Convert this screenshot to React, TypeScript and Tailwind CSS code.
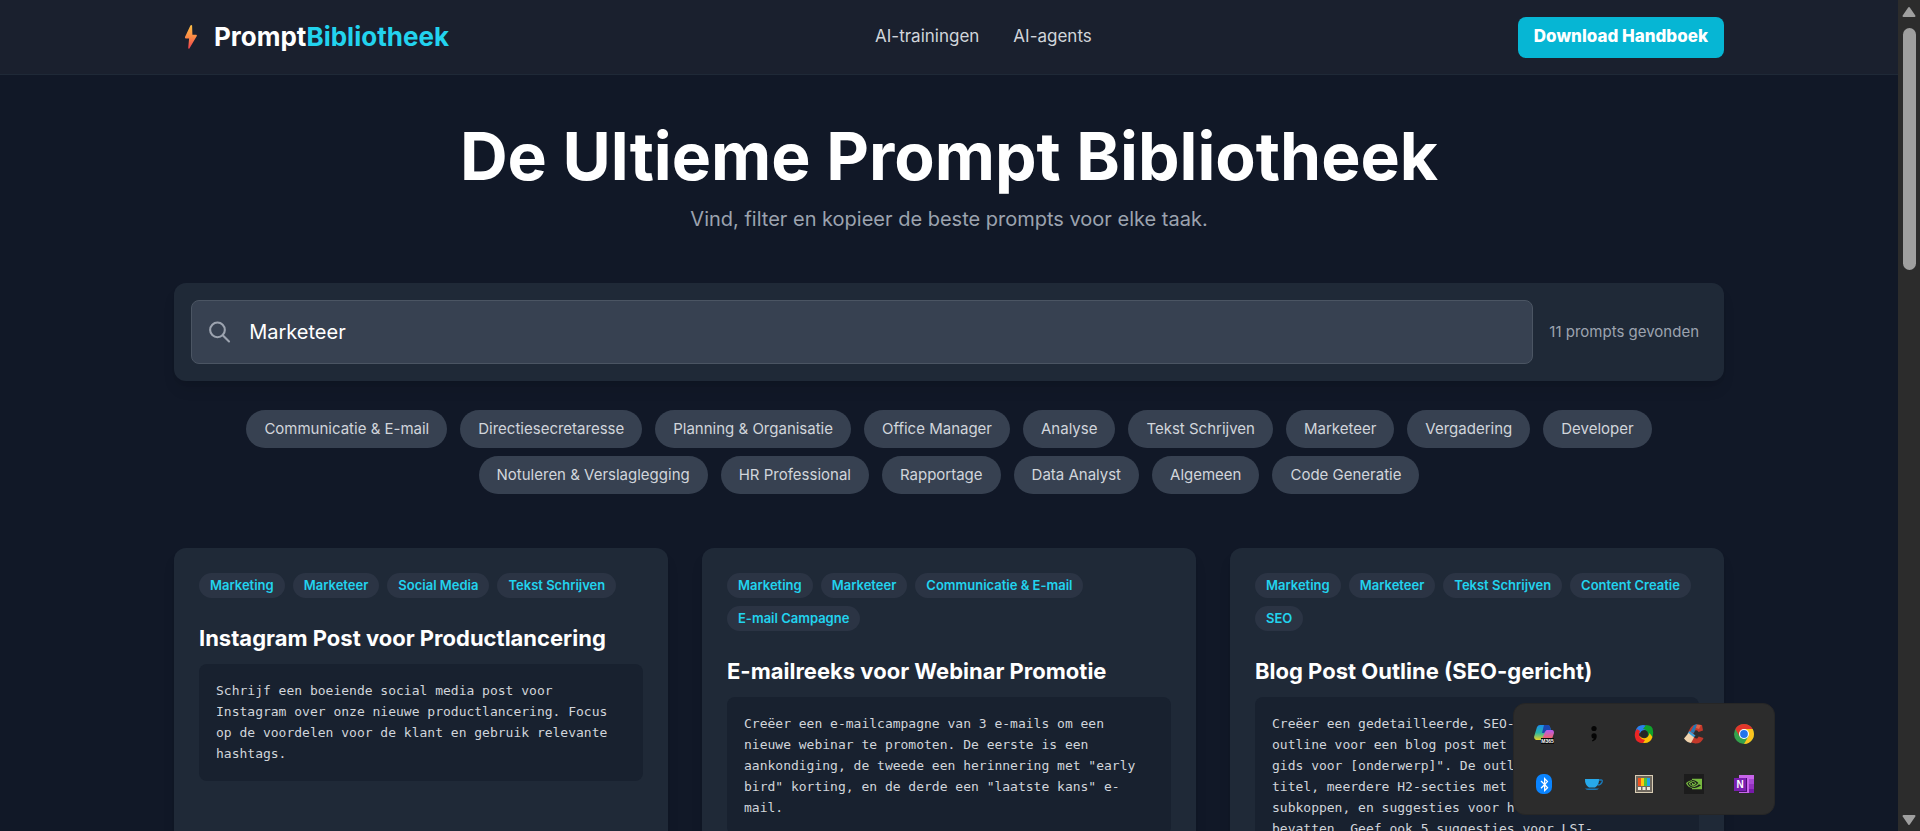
import { useState } from "react";
import { FaBluetoothB } from "react-icons/fa";
import { SiNvidia } from "react-icons/si";

const filters = [
    "Communicatie & E-mail",
    "Directiesecretaresse",
    "Planning & Organisatie",
    "Office Manager",
    "Analyse",
    "Tekst Schrijven",
    "Marketeer",
    "Vergadering",
    "Developer",
    "Notuleren & Verslaglegging",
    "HR Professional",
    "Rapportage",
    "Data Analyst",
    "Algemeen",
    "Code Generatie",
];

const prompts = [
    {
        title: "Instagram Post voor Productlancering",
        tags: ["Marketing", "Marketeer", "Social Media", "Tekst Schrijven"],
        lines: [
            "Schrijf een boeiende social media post voor",
            "Instagram over onze nieuwe productlancering. Focus",
            "op de voordelen voor de klant en gebruik relevante",
            "hashtags.",
        ],
    },
    {
        title: "E-mailreeks voor Webinar Promotie",
        tags: ["Marketing", "Marketeer", "Communicatie & E-mail", "E-mail Campagne"],
        lines: [
            "Creëer een e-mailcampagne van 3 e-mails om een",
            "nieuwe webinar te promoten. De eerste is een",
            'aankondiging, de tweede een herinnering met "early',
            'bird" korting, en de derde een "laatste kans" e-',
            "mail.",
        ],
    },
    {
        title: "Blog Post Outline (SEO-gericht)",
        tags: ["Marketing", "Marketeer", "Tekst Schrijven", "Content Creatie", "SEO"],
        lines: [
            "Creëer een gedetailleerde, SEO-",
            "outline voor een blog post met",
            'gids voor [onderwerp]". De outline',
            "titel, meerdere H2-secties met",
            "subkoppen, en suggesties voor h",
            "bevatten. Geef ook 5 suggesties voor LSI-",
        ],
    },
];

function Bolt() {
    return (
        <svg viewBox="0 0 18 26" className="h-[26px] w-[18px]" aria-hidden="true">
            <defs>
                <linearGradient id="bolt" x1="0" y1="0" x2="0" y2="1">
                    <stop offset="0" stopColor="#fcc046" />
                    <stop offset="0.5" stopColor="#fb8a45" />
                    <stop offset="1" stopColor="#ee3f4f" />
                </linearGradient>
            </defs>
            <path
                d="M8.400 1.500 3 13q-.4 1.400.8 1.400h3.300L6.200 24q.2 1.300 1.200.5L14.800 12q.4-1.300-.8-1.300h-3.600L10.100 1.600q-.6-1.300-1.700-.1Z"
                fill="url(#bolt)"
            />
        </svg>
    );
}

function Header() {
    return (
        <header className="border-b border-[#1f2937] bg-[#1a202e]">
            <div className="mx-auto flex h-[74px] max-w-[1550px] items-center justify-between">
                <a href="#" className="flex items-center gap-[14px] pl-2 text-[26px] font-bold leading-8 text-white">
                    <Bolt />
                    <span>
                        Prompt<span className="text-[#22d3ee]">Bibliotheek</span>
                    </span>
                </a>
                <nav className="flex gap-[34px] text-[17px] text-[#d1d5db]">
                    <a href="#trainingen">AI-trainingen</a>
                    <a href="#agents">AI-agents</a>
                </nav>
                <button
                    type="button"
                    className="h-[41px] rounded-lg bg-[#06b6d4] px-4 text-[17px] font-extrabold text-white"
                >
                    Download Handboek
                </button>
            </div>
        </header>
    );
}

function TrayItem({ label, children }: { label: string; children: React.ReactNode }) {
    return (
        <button type="button" aria-label={label} className="flex size-[50px] items-center justify-center">
            {children}
        </button>
    );
}

function Tray() {
    return (
        <div className="absolute right-[145px] bottom-4 grid grid-cols-5 rounded-xl border border-[#262626] bg-[#2c2c2c] p-[5px]">
            <TrayItem label="Copilot">
                <svg viewBox="0 0 20 20" className="size-5">
                    <defs>
                        <linearGradient id="copA" x1="0" y1="0" x2="0" y2="1">
                            <stop offset="0" stopColor="#1a8cf0" />
                            <stop offset="0.5" stopColor="#29b6a5" />
                            <stop offset="1" stopColor="#f2d51e" />
                        </linearGradient>
                        <linearGradient id="copB" x1="0" y1="0" x2="0" y2="1">
                            <stop offset="0" stopColor="#b45af2" />
                            <stop offset="1" stopColor="#f6655c" />
                        </linearGradient>
                    </defs>
                    <path d="M6 1h7q2 0 3 2l1 3h-4l-3 9q-1 2-3 1H2q-2-1-2-3L3 3Q4 1 6 1Z" fill="url(#copA)" />
                    <path d="M10 1h4q2 0 2 2l1 3h-4l-3 3H8Z" fill="#1b46b0" />
                    <path d="M13 6h5q2 0 2 3l-2 6H8l3-7q1-2 2-2Z" fill="url(#copB)" />
                    <rect x="7" y="14" width="13" height="6" fill="#080808" />
                    <text x="13.5" y="19" fontSize="5" fontWeight="700" textAnchor="middle" fill="#ffffff" fontFamily="Liberation Sans, sans-serif">M365</text>
                </svg>
            </TrayItem>
            <TrayItem label="Puntkomma">
                <svg viewBox="0 0 20 20" className="size-5">
                    <circle cx="10" cy="4.500" r="2.600" fill="#050505" />
                    <path d="M7.400 12a2.600 2.600 0 0 1 5.300 0q.2 4-4.200 5.500l-.5-1.200q1.800-.7 1.800-1.800-2.400 0-2.400-2.500Z" fill="#050505" />
                </svg>
            </TrayItem>
            <TrayItem label="Synchronisatie">
                <svg viewBox="0 0 20 20" className="size-5">
                    <path d="M1.500 7Q3 1 9 1q4 0 6 3l-1 3q-5-3-8 2-1 1-4 1Z" fill="#2a80ee" />
                    <path d="M12 1q7 0 7 6 1 5-3 9l-4-1q4-4 1-8-2-2-4-2Z" fill="#10a12c" />
                    <path d="M18.500 13q-2 6-8 6-5 0-7-4l2-3q4 4 8 1 2-2 2-4Z" fill="#fbc105" />
                    <path d="M9 19q-7 0-8-6-1-4 2-8l3 2q-2 4 0 6 2 3 5 3Z" fill="#ea2424" />
                    <circle cx="10" cy="10" r="3.400" fill="#262626" />
                </svg>
            </TrayItem>
            <TrayItem label="CCleaner">
                <svg viewBox="0 0 20 20" className="size-5">
                    <path d="M19 6.500 14.500 8q-1-2.500-3.300-1.500-2.500 1.500-1.500 5.500 1 3 3.500 2.500l1.500-2 4.800 1.500q-2 5.500-8 5.500Q3.500 19 4 11 5 1 12.500.5L18 1Z" fill="#c3382a" />
                    <path d="M12.500.5 17 1l-2 4-3-1Z" fill="#de6246" />
                    <path d="m13 0-3 9-3.500-1L10 1Z" fill="#2478b4" />
                    <path d="m5.500 7 6 4.500-2 2-6-4Z" fill="#3ba0d9" />
                    <path d="m4.500 9 5.500 4.500L7 19q-4-.5-7-4.500Z" fill="#f0d3ad" />
                </svg>
            </TrayItem>
            <TrayItem label="Chrome">
                <svg viewBox="0 0 20 20" className="size-5">
                    <circle cx="10" cy="10" r="10" fill="#34a24c" />
                    <path d="M1.340 5A10 10 0 0 1 18.660 5H10Q6 5 5.700 12.500Z" fill="#e2362b" />
                    <path d="M18.660 5A10 10 0 0 1 10 20l4.300-7.500Q16 8 10 5Z" fill="#fcc31e" />
                    <circle cx="10" cy="10" r="5" fill="#ffffff" />
                    <circle cx="10" cy="10" r="3.900" fill="#2374ea" />
                </svg>
            </TrayItem>
            <TrayItem label="Bluetooth">
                <span className="flex h-5 w-4 items-center justify-center rounded-[7px] bg-[#0a84ff] text-white">
                    <FaBluetoothB className="size-[15px]" />
                </span>
            </TrayItem>
            <TrayItem label="Koffie">
                <svg viewBox="0 0 20 20" className="size-5">
                    <path d="M14 6h3.200q1.500.2 1 1.700-1 3-4.700 3.300" fill="none" stroke="#1878b8" strokeWidth="1.300" />
                    <path d="M1 5h14q.3 6-4 8.500H5Q.7 11 1 5Z" fill="#27a9ea" />
                    <path d="M1 14.500h14q-1.500 1.500-3.500 1.500h-7Q2.500 16 1 14.500Z" fill="#1878b8" />
                </svg>
            </TrayItem>
            <TrayItem label="PowerToys">
                <svg viewBox="0 0 18 18" className="size-[18px]">
                    <rect width="18" height="18" fill="#d8ccb4" />
                    <rect x="1" y="1" width="16" height="16" fill="#6e675d" />
                    <rect x="3" y="3" width="3" height="8" fill="#f0511f" />
                    <rect x="6" y="3" width="3" height="8" fill="#fcc60d" />
                    <rect x="9" y="3" width="3" height="8" fill="#4cc23c" />
                    <rect x="12" y="3" width="3" height="8" fill="#1ba2ee" />
                    <rect x="3" y="12" width="3" height="3" fill="#efe9dc" />
                    <rect x="7.500" y="12" width="3" height="3" fill="#efe9dc" />
                    <rect x="12" y="12" width="3" height="3" fill="#efe9dc" />
                </svg>
            </TrayItem>
            <TrayItem label="NVIDIA">
                <span className="flex size-5 items-center justify-center bg-[#1c1c1c] text-[#76b93f]">
                    <SiNvidia className="size-4" />
                </span>
            </TrayItem>
            <TrayItem label="OneNote">
                <svg viewBox="0 0 20 20" className="size-5">
                    <rect x="5" y="1" width="15" height="18" fill="#c864ea" />
                    <rect x="15" y="5" width="5" height="5" fill="#a848d4" />
                    <rect x="15" y="10" width="5" height="5" fill="#9332bf" />
                    <rect x="15" y="15" width="5" height="4" fill="#7719aa" />
                    <rect x="5" y="4" width="8" height="14" fill="#4a1070" />
                    <rect y="4" width="12" height="13" fill="#7a1fb0" />
                    <text x="6" y="14" fontSize="10" fontWeight="700" textAnchor="middle" fill="#ffffff" fontFamily="Liberation Sans, sans-serif">N</text>
                </svg>
            </TrayItem>
        </div>
    );
}

function ScrollBar() {
    return (
        <div className="flex w-[22px] shrink-0 flex-col items-center bg-[#2c2c2c] pt-[6px] pb-[5px]" aria-hidden="true">
            <svg viewBox="0 0 14 12" className="h-3 w-3.5">
                <path d="M7 2 12.500 10h-11Z" fill="#9f9f9f" stroke="#9f9f9f" strokeWidth="2" strokeLinejoin="round" />
            </svg>
            <div className="mt-[10px] h-[242px] w-[13px] rounded-full bg-[#9f9f9f]" />
            <svg viewBox="0 0 14 12" className="mt-auto h-3 w-3.5">
                <path d="M7 10 1.500 2h11Z" fill="#9f9f9f" stroke="#9f9f9f" strokeWidth="2" strokeLinejoin="round" />
            </svg>
        </div>
    );
}

export default function App() {
    const [search, setSearch] = useState("Marketeer");

    return (
        <div className="relative flex h-screen overflow-hidden bg-[#111827] font-['Inter',sans-serif]">
            <div className="min-w-0 flex-1">
                <Header />

                <main className="mx-auto max-w-[1550px] pt-[42px]">
                    {/* Title */}
                    <div className="text-center">
                        <h1 className="text-[66px] font-bold leading-[78px] text-white">De Ultieme Prompt Bibliotheek</h1>
                        <p className="mt-[9px] text-[20px] leading-[30px] text-[#9ca3af]">
                            Vind, filter en kopieer de beste prompts voor elke taak.
                        </p>
                    </div>

                    {/* Search */}
                    <div className="mt-[49px] flex items-center gap-4 rounded-xl bg-[#1f2937] py-[17px] pr-[25px] pl-[17px] shadow-lg">
                        <label className="flex h-16 flex-1 items-center gap-[17px] rounded-lg border border-[#4b5563] bg-[#374151] px-[15px]">
                            <svg viewBox="0 0 24 24" className="size-[26px] text-[#9ca3af]" fill="none" stroke="currentColor" strokeWidth="2" strokeLinecap="round">
                                <path d="m21 21-6-6m2-5a7 7 0 1 1-14 0 7 7 0 0 1 14 0Z" />
                            </svg>
                            <input
                                type="text"
                                aria-label="Zoek prompts"
                                value={search}
                                onChange={(e) => setSearch(e.target.value)}
                                className="h-full w-full text-[20px] text-white outline-none"
                            />
                        </label>
                        <span className="text-[15px] text-[#9ca3af]">11 prompts gevonden</span>
                    </div>

                    {/* Filters */}
                    <div className="mt-[29px] flex flex-wrap justify-center gap-x-[13px] gap-y-2 px-16">
                        {filters.map((filter) => (
                            <button
                                key={filter}
                                type="button"
                                className="h-[38px] rounded-full bg-[#374151] px-[18px] text-[15px] text-[#d1d5db]"
                            >
                                {filter}
                            </button>
                        ))}
                    </div>

                    {/* Prompt cards */}
                    <div className="mt-[54px] grid grid-cols-3 gap-[34px]">
                        {prompts.map((prompt) => (
                            <article key={prompt.title} className="min-h-[400px] rounded-xl bg-[#1f2937] p-[25px] shadow-lg">
                                <div className="flex flex-wrap gap-2">
                                    {prompt.tags.map((tag) => (
                                        <span
                                            key={tag}
                                            className="h-[25px] rounded-full bg-[#2b3444] px-[11px] text-[13px] font-semibold leading-6 text-[#22d3ee]"
                                        >
                                            {tag}
                                        </span>
                                    ))}
                                </div>
                                <h2 className="mt-[25px] text-[22px] font-bold leading-[30px] text-white">{prompt.title}</h2>
                                <pre className="mt-[11px] rounded-lg bg-[#18212f] px-[17px] pt-4 pb-[17px] font-['DejaVu_Sans_Mono',monospace] text-[13px] leading-[21px] text-[#d1d5db]">
                                    {prompt.lines.join("\n")}
                                </pre>
                            </article>
                        ))}
                    </div>
                </main>
            </div>
            <ScrollBar />
            <Tray />
        </div>
    );
}
